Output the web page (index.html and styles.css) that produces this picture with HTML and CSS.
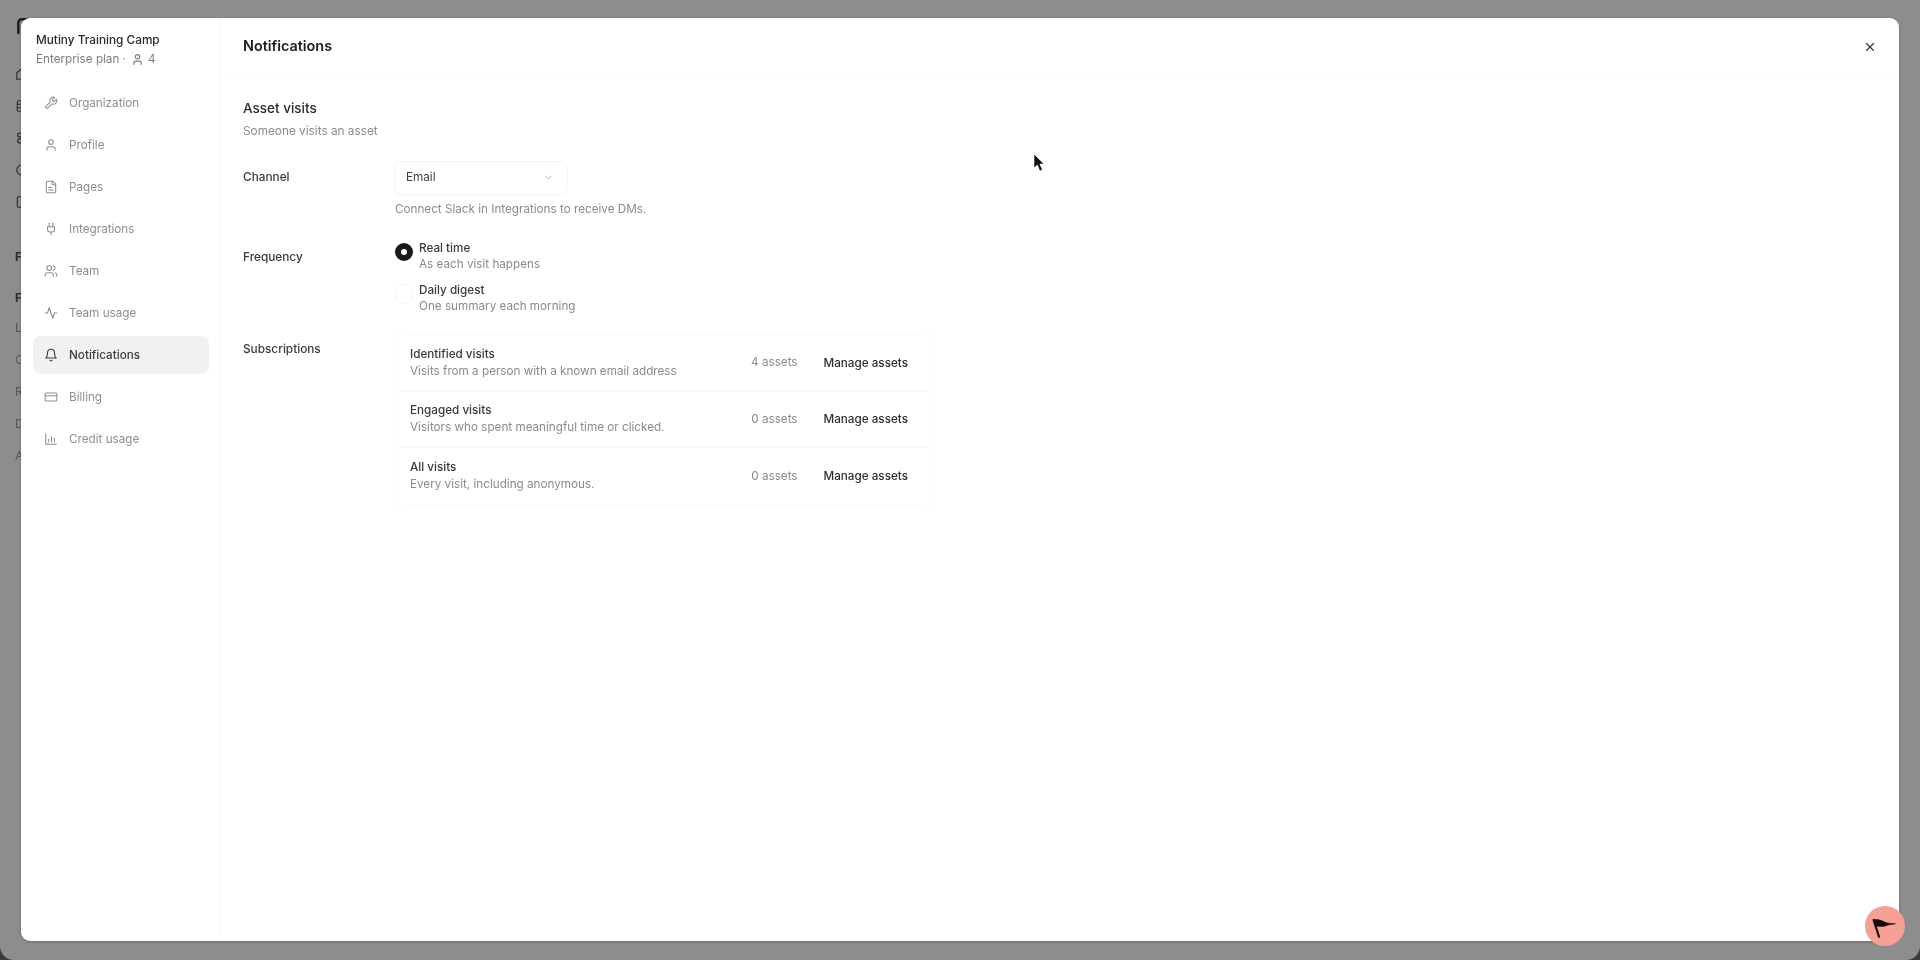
FILE: index.html
```html
<!DOCTYPE html>
<html lang="en">
<head>
    <meta charset="UTF-8">
    <meta name="viewport" content="width=device-width, initial-scale=1.0">
    <title>Notifications</title>
    <link rel="stylesheet" href="styles.css">
</head>
<body>
    <div class="app">
        <!-- App sidebar behind the dialog, only its edge shows -->
        <div class="behind">
            <div class="behind-logo">
                <svg viewBox="0 0 24 24" class="icon"><path d="M4 20V8a4 4 0 0 1 4-4h12"/></svg>
            </div>
            <div class="behind-icons">
                <svg viewBox="0 0 24 24" class="icon"><path d="M3 10l9-7 9 7v11H3z"/></svg>
                <svg viewBox="0 0 24 24" class="icon"><rect x="4" y="3" width="16" height="18" rx="2"/><path d="M4 9h16M4 15h16"/></svg>
                <svg viewBox="0 0 24 24" class="icon"><circle cx="8" cy="7" r="3.5"/><circle cx="8" cy="17" r="3.5"/></svg>
                <svg viewBox="0 0 24 24" class="icon"><circle cx="12" cy="12" r="9"/></svg>
                <svg viewBox="0 0 24 24" class="icon"><rect x="4" y="3" width="16" height="18" rx="2"/></svg>
            </div>
            <div class="behind-head">F</div>
            <div class="behind-head second">F</div>
            <div class="behind-list">
                <span>L</span>
                <span>C</span>
                <span>R</span>
                <span>D</span>
                <span>A</span>
            </div>
        </div>

        <div class="overlay">
            <div class="modal">
                <aside class="side">
                    <div class="org">
                        <div class="org-name">Mutiny Training Camp</div>
                        <div class="org-plan">
                            Enterprise plan ·
                            <svg viewBox="0 0 24 24" class="icon seats"><path d="M19 21v-2a4 4 0 0 0-4-4H9a4 4 0 0 0-4 4v2"/><circle cx="12" cy="7" r="4"/></svg>
                            4
                        </div>
                    </div>
                    <nav class="nav">
                        <a class="nav-item"><svg viewBox="0 0 24 24" class="icon"><path d="M14.7 6.3a1 1 0 0 0 0 1.4l1.6 1.6a1 1 0 0 0 1.4 0l3.77-3.77a6 6 0 0 1-7.94 7.94l-6.91 6.91a2.12 2.12 0 0 1-3-3l6.91-6.91a6 6 0 0 1 7.94-7.94l-3.76 3.76z"/></svg>Organization</a>
                        <a class="nav-item"><svg viewBox="0 0 24 24" class="icon"><path d="M19 21v-2a4 4 0 0 0-4-4H9a4 4 0 0 0-4 4v2"/><circle cx="12" cy="7" r="4"/></svg>Profile</a>
                        <a class="nav-item"><svg viewBox="0 0 24 24" class="icon"><path d="M15 2H6a2 2 0 0 0-2 2v16a2 2 0 0 0 2 2h12a2 2 0 0 0 2-2V7Z"/><path d="M14 2v4a2 2 0 0 0 2 2h4"/><path d="M8 13h5M8 17h8"/></svg>Pages</a>
                        <a class="nav-item"><svg viewBox="0 0 24 24" class="icon"><path d="M12 22v-5"/><path d="M9 8V2"/><path d="M15 8V2"/><path d="M18 8v5a4 4 0 0 1-4 4h-4a4 4 0 0 1-4-4V8Z"/></svg>Integrations</a>
                        <a class="nav-item"><svg viewBox="0 0 24 24" class="icon"><path d="M16 21v-2a4 4 0 0 0-4-4H6a4 4 0 0 0-4 4v2"/><circle cx="9" cy="7" r="4"/><path d="M22 21v-2a4 4 0 0 0-3-3.87"/><path d="M16 3.13a4 4 0 0 1 0 7.75"/></svg>Team</a>
                        <a class="nav-item"><svg viewBox="0 0 24 24" class="icon"><path d="M22 12h-4l-3 9L9 3l-3 9H2"/></svg>Team usage</a>
                        <a class="nav-item active"><svg viewBox="0 0 24 24" class="icon"><path d="M6 8a6 6 0 0 1 12 0c0 7 3 9 3 9H3s3-2 3-9"/><path d="M10.3 21a1.94 1.94 0 0 0 3.4 0"/></svg>Notifications</a>
                        <a class="nav-item"><svg viewBox="0 0 24 24" class="icon"><rect x="2" y="5" width="20" height="14" rx="2"/><path d="M2 10h20"/></svg>Billing</a>
                        <a class="nav-item"><svg viewBox="0 0 24 24" class="icon"><path d="M3 3v18h18"/><path d="M8 17v-4"/><path d="M13 17V8"/><path d="M18 17v-6"/></svg>Credit usage</a>
                    </nav>
                </aside>

                <main class="main">
                    <header class="main-head">
                        <h1>Notifications</h1>
                        <button class="close">
                            <svg viewBox="0 0 24 24" class="icon"><path d="M18 6 6 18"/><path d="m6 6 12 12"/></svg>
                        </button>
                    </header>

                    <section class="section">
                        <h2>Asset visits</h2>
                        <p class="section-sub">Someone visits an asset</p>

                        <div class="field channel">
                            <div class="field-label">Channel</div>
                            <div>
                                <div class="select">
                                    Email
                                    <svg viewBox="0 0 24 24" class="icon"><path d="m6 9 6 6 6-6"/></svg>
                                </div>
                                <p class="help">Connect Slack in Integrations to receive DMs.</p>
                            </div>
                        </div>

                        <div class="field frequency">
                            <div class="field-label">Frequency</div>
                            <div class="radios">
                                <div class="radio-row">
                                    <span class="radio on"></span>
                                    <div>
                                        <div class="radio-title">Real time</div>
                                        <div class="radio-sub">As each visit happens</div>
                                    </div>
                                </div>
                                <div class="radio-row">
                                    <span class="radio"></span>
                                    <div>
                                        <div class="radio-title">Daily digest</div>
                                        <div class="radio-sub">One summary each morning</div>
                                    </div>
                                </div>
                            </div>
                        </div>

                        <div class="field subscriptions">
                            <div class="field-label">Subscriptions</div>
                            <div class="subs">
                                <div class="sub-row">
                                    <div class="sub-text">
                                        <div class="sub-title">Identified visits</div>
                                        <div class="sub-desc">Visits from a person with a known email address</div>
                                    </div>
                                    <span class="sub-count">4 assets</span>
                                    <span class="sub-link">Manage assets</span>
                                </div>
                                <div class="sub-row">
                                    <div class="sub-text">
                                        <div class="sub-title">Engaged visits</div>
                                        <div class="sub-desc">Visitors who spent meaningful time or clicked.</div>
                                    </div>
                                    <span class="sub-count">0 assets</span>
                                    <span class="sub-link">Manage assets</span>
                                </div>
                                <div class="sub-row">
                                    <div class="sub-text">
                                        <div class="sub-title">All visits</div>
                                        <div class="sub-desc">Every visit, including anonymous.</div>
                                    </div>
                                    <span class="sub-count">0 assets</span>
                                    <span class="sub-link">Manage assets</span>
                                </div>
                            </div>
                        </div>
                    </section>
                </main>
            </div>
        </div>

        <!-- Mouse pointer caught in the recording -->
        <svg class="pointer" viewBox="0 0 12 20"><path d="M1 1v14l3.4-3 2.4 6 2.6-1.1-2.5-5.8H11z"/></svg>

        <button class="flag">
            <svg viewBox="0 0 24 24"><path d="M1.500 6.500 6.500 22"/><path class="flag-cloth" d="M1.500 6.500C4 5.500 8 6.500 11 8S16 9.500 21.500 10C17 10.500 14 11 12 12 9 13 6 11.500 3.500 12.500Z"/></svg>
        </button>
    </div>
</body>
</html>
```

FILE: styles.css
```css
* {
    box-sizing: border-box;
}

html, body {
    height: 100%;
}

body {
    margin: 0;
    background-color: #3a3a3a;
    font-family: Inter, "Noto Sans", sans-serif;
    overflow: hidden;
}

.app {
    position: relative;
    width: 100%;
    height: 100%;
    background-color: #8d8d8d;
    border-radius: 0 0 14px 14px;
    overflow: hidden;
    filter: blur(0.5px);
}

.icon {
    width: 14px;
    height: 14px;
    fill: none;
    stroke: currentColor;
    stroke-width: 2;
    stroke-linecap: round;
    stroke-linejoin: round;
    flex-shrink: 0;
}

/* Behind the dialog */
.behind {
    padding: 16px 0 0 15px;
    color: #2e2e2e;
    font-size: 12px;
}

.behind-logo .icon {
    width: 20px;
    height: 20px;
    stroke-width: 3;
    color: #1c1c1c;
}

.behind-icons {
    display: flex;
    flex-direction: column;
    gap: 18px;
    margin-top: 28px;
}

.behind-head {
    margin-top: 40px;
    font-weight: 700;
}

.behind-head.second {
    margin-top: 26px;
}

.behind-list {
    display: flex;
    flex-direction: column;
    gap: 17px;
    margin-top: 15px;
    color: #555;
}

.overlay {
    position: absolute;
    inset: 0;
    padding: 18px 21px 19px 21px;
}

.modal {
    display: flex;
    height: 100%;
    background-color: #fff;
    border-radius: 9px;
    box-shadow: 0 1px 3px rgba(0, 0, 0, 0.25);
    overflow: hidden;
}

/* Settings sidebar */
.side {
    width: 200px;
    flex-shrink: 0;
    border-right: 1px solid #f9f9f9;
    padding: 13px 11px 0 12px;
}

.org {
    padding-left: 3px;
}

.org-name {
    font-size: 11.800px;
    font-weight: 500;
    line-height: 19px;
    color: #2a2a2a;
}

.org-plan {
    display: flex;
    align-items: center;
    gap: 3px;
    font-size: 11.700px;
    line-height: 19px;
    color: #7d7d7d;
}

.seats {
    width: 13px;
    height: 13px;
    margin: 0 1px 0 2px;
}

.nav {
    display: flex;
    flex-direction: column;
    gap: 4px;
    margin-top: 15px;
}

.nav-item {
    display: flex;
    align-items: center;
    gap: 11px;
    height: 38px;
    padding-left: 11px;
    border-radius: 8px;
    font-size: 11.700px;
    color: #8e8e8e;
}

.nav-item .icon {
    width: 14px;
    height: 14px;
    stroke-width: 1.800;
}

.nav-item.active {
    background-color: #f1f1f1;
    color: #3c3c3c;
    font-weight: 500;
}

/* Main panel */
.main {
    flex: 1;
    min-width: 0;
}

.main-head {
    display: flex;
    align-items: center;
    justify-content: space-between;
    height: 59px;
    padding: 0 22px;
    border-bottom: 1px solid #fafafa;
}

h1 {
    margin: 0 0 3px;
    font-size: 14.400px;
    font-weight: 600;
    color: #1d1d1d;
}

.close {
    display: flex;
    padding: 0;
    border: none;
    background: none;
    color: #333;
}

.section {
    padding: 21px 22px 0 22px;
}

h2 {
    margin: 0;
    font-size: 13.500px;
    line-height: 21px;
    font-weight: 500;
    color: #2b2b2b;
}

.section-sub {
    margin: 3px 0 0;
    font-size: 11.800px;
    line-height: 18px;
    color: #8b8b8b;
}

.field {
    display: grid;
    grid-template-columns: 152px 1fr;
}

.field-label {
    font-size: 11.800px;
    font-weight: 500;
    line-height: 18px;
    color: #3a3a3a;
}

.channel {
    margin-top: 21px;
}

.channel .field-label {
    padding-top: 7px;
}

.select {
    display: flex;
    align-items: center;
    justify-content: space-between;
    width: 172px;
    height: 32px;
    margin-top: 1px;
    padding: 0 13px 2px 11px;
    border-radius: 6px;
    box-shadow: 0 0 0 1px #f5f5f5, 0 1px 2px rgba(0, 0, 0, 0.05);
    font-size: 11.700px;
    color: #3f3f3f;
}

.select .icon {
    width: 11px;
    height: 11px;
    color: #999;
    stroke-width: 1.600;
}

.help {
    margin: 6px 0 0;
    font-size: 11.700px;
    line-height: 18px;
    color: #8b8b8b;
}

.frequency {
    margin-top: 22px;
}

.frequency .field-label {
    padding-top: 8px;
}

.radios {
    display: flex;
    flex-direction: column;
    gap: 10px;
}

.radio-row {
    display: flex;
    gap: 6px;
}

.radio {
    width: 18px;
    height: 18px;
    margin-top: 3px;
    border-radius: 50%;
    box-shadow: 0 0 0 1px #f5f5f5;
    flex-shrink: 0;
}

.radio.on {
    border: 6px solid #1a1a1a;
    box-shadow: none;
}

.radio-title {
    font-size: 11.700px;
    font-weight: 500;
    line-height: 16px;
    color: #3a3a3a;
}

.radio-sub {
    font-size: 11.700px;
    line-height: 16px;
    color: #8b8b8b;
}

.subscriptions {
    margin-top: 21px;
}

.subscriptions .field-label {
    padding-top: 5px;
}

.subs {
    width: 538px;
    border-radius: 8px;
    box-shadow: 0 0 0 1px #f9f9f9;
}

.sub-row {
    display: flex;
    align-items: center;
    height: 56.600px;
    padding: 0 25px 0 15px;
    border-bottom: 1px solid #f8f8f8;
}

.sub-row:last-child {
    border-bottom: none;
}

.sub-text {
    flex: 1;
}

.sub-title {
    font-size: 11.700px;
    font-weight: 500;
    line-height: 17px;
    color: #3a3a3a;
}

.sub-desc {
    font-size: 11.700px;
    line-height: 17px;
    color: #8b8b8b;
}

.sub-count {
    margin-top: -1px;
    font-size: 11.700px;
    color: #8b8b8b;
}

.sub-link {
    margin-left: 26px;
    font-size: 11.700px;
    font-weight: 500;
    color: #2e2e2e;
}

/* Things floating on top */
.pointer {
    position: absolute;
    left: 1033px;
    top: 153px;
    width: 12px;
    height: 20px;
    fill: #111;
    stroke: #fff;
    stroke-width: 0.6;
}

.flag {
    position: absolute;
    right: 15px;
    bottom: 14px;
    display: flex;
    align-items: center;
    justify-content: center;
    width: 40px;
    height: 40px;
    padding: 0;
    border: none;
    border-radius: 50%;
    background-color: #f4a094;
}

.flag svg {
    width: 26px;
    height: 26px;
    fill: none;
    stroke: #1a0a08;
    stroke-width: 2;
    stroke-linecap: round;
}

.flag .flag-cloth {
    fill: #1a0a08;
    stroke-width: 0.6;
}
```
